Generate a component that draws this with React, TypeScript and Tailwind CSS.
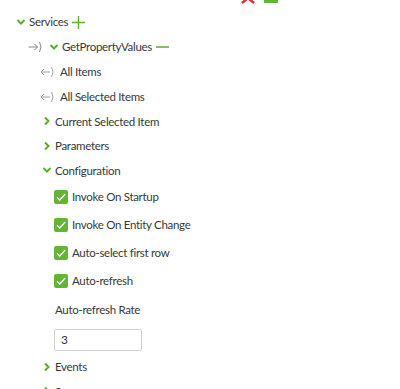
import React from 'react';

const Chevron = ({ open }: { open?: boolean }) => (
  <svg width="10" height="10" viewBox="0 0 10 10" className="shrink-0">
    {open ? (
      <path d="M1.5 3 L5 6.5 L8.5 3" fill="none" stroke="#5aae2e" strokeWidth="2" />
    ) : (
      <path d="M3 1.5 L6.5 5 L3 8.5" fill="none" stroke="#5aae2e" strokeWidth="2" />
    )}
  </svg>
);

const ArrowIn = () => (
  <svg width="15" height="12" viewBox="0 0 15 12" className="shrink-0">
    <path d="M0.5 6 H9.5 M6.5 3 L9.5 6 L6.5 9" fill="none" stroke="#8a8a8a" strokeWidth="1" />
    <path d="M11.5 1 Q14.5 6 11.5 11" fill="none" stroke="#8a8a8a" strokeWidth="1" />
  </svg>
);

const ArrowOut = () => (
  <svg width="15" height="12" viewBox="0 0 15 12" className="shrink-0">
    <path d="M1 6 H10 M4 3 L1 6 L4 9" fill="none" stroke="#a0a0a0" strokeWidth="1" />
    <path d="M11.5 1 Q14.5 6 11.5 11" fill="none" stroke="#a0a0a0" strokeWidth="1" />
  </svg>
);

const Check = ({ label }: { label: string }) => (
  <div className="flex items-center h-[28px] pl-[54px]">
    <span className="w-[14px] h-[14px] rounded-[2px] bg-[#62b535] flex items-center justify-center">
      <svg width="12" height="12" viewBox="0 0 12 12">
        <path d="M2 6.2 L4.8 9 L10.2 3" fill="none" stroke="#fff" strokeWidth="1.4" />
      </svg>
    </span>
    <span className="ml-[4px]">{label}</span>
  </div>
);

const Node = ({ label, open }: { label: string; open?: boolean }) => (
  <div className="flex items-center h-[24.5px] pl-[42px]">
    <Chevron open={open} />
    <span className="ml-[3px]">{label}</span>
  </div>
);

export default function App() {
  return (
    <div className="relative w-[400px] h-[389px] overflow-hidden bg-white text-[11.5px] tracking-[-0.3px] text-[#383838] font-['Segoe_UI','Lato',sans-serif]">
      {/* toolbar remnants at top */}
      <div className="absolute top-[-8px] left-[241px] flex items-start gap-[9px]">
        <svg width="14" height="12" viewBox="0 0 14 12">
          <path d="M1 1 L13 11 M13 1 L1 11" stroke="#e52b2b" strokeWidth="2.5" />
        </svg>
        <span className="mt-[8px] w-[14px] h-[3px] bg-[#62b535]" />
      </div>

      <div className="pt-[10px]">
        <div className="flex items-center h-[24px] pl-[16px]">
          <Chevron open />
          <span className="ml-[3px]">Services</span>
          <svg width="13" height="13" viewBox="0 0 13 13" className="ml-[4px]">
            <path d="M6.5 0 V13 M0 6.5 H13" stroke="#5aae2e" strokeWidth="1.3" />
          </svg>
        </div>
        <div className="flex items-center h-[25px] pl-[28px]">
          <ArrowIn />
          <span className="ml-[6px]"><Chevron open /></span>
          <span className="ml-[3px]">GetPropertyValues</span>
          <svg width="13" height="4" viewBox="0 0 13 4" className="ml-[4px]">
            <path d="M0 2 H13" stroke="#5aae2e" strokeWidth="1.5" />
          </svg>
        </div>
        <div className="flex items-center h-[25px] pl-[40px]">
          <ArrowOut />
          <span className="ml-[5px]">All Items</span>
        </div>
        <div className="flex items-center h-[25px] pl-[40px]">
          <ArrowOut />
          <span className="ml-[5px]">All Selected Items</span>
        </div>
        <Node label="Current Selected Item" />
        <Node label="Parameters" />
        <Node label="Configuration" open />
        <Check label="Invoke On Startup" />
        <Check label="Invoke On Entity Change" />
        <Check label="Auto-select first row" />
        <Check label="Auto-refresh" />
        <div className="pl-[55px] h-[30px] flex items-center">Auto-refresh Rate</div>
        <div className="pl-[54px] py-[4px]">
          <input
            readOnly
            value="3"
            className="w-[88px] h-[22px] border border-[#cfcfcf] rounded-[2px] px-[6px] text-[12px] text-[#333] outline-none"
          />
        </div>
        <Node label="Events" />
        <Node label="Sources" />
      </div>
    </div>
  );
}
